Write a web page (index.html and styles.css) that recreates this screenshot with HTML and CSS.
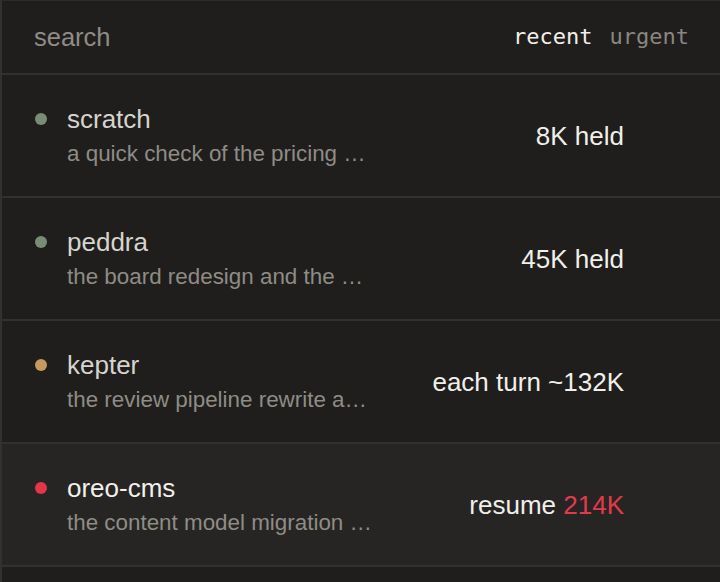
FILE: index.html
```html
<!DOCTYPE html>
<html lang="en">
<head>
    <meta charset="UTF-8">
    <meta name="viewport" content="width=device-width, initial-scale=1.0">
    <title>Sessions</title>
    <link rel="stylesheet" href="styles.css">
</head>
<body>
    <div class="panel">
        <header class="toolbar">
            <span class="search">search</span>
            <nav class="sort">
                <span class="sort-btn active">recent</span>
                <span class="sort-btn">urgent</span>
            </nav>
        </header>

        <ul class="session-list">
            <li class="session">
                <div class="info">
                    <div class="head">
                        <span class="dot idle"></span>
                        <span class="name">scratch</span>
                    </div>
                    <p class="desc">a quick check of the pricing …</p>
                </div>
                <span class="amount">8K held</span>
            </li>
            <li class="session">
                <div class="info">
                    <div class="head">
                        <span class="dot idle"></span>
                        <span class="name">peddra</span>
                    </div>
                    <p class="desc">the board redesign and the …</p>
                </div>
                <span class="amount">45K held</span>
            </li>
            <li class="session">
                <div class="info">
                    <div class="head">
                        <span class="dot busy"></span>
                        <span class="name">kepter</span>
                    </div>
                    <p class="desc">the review pipeline rewrite a…</p>
                </div>
                <span class="amount">each turn ~132K</span>
            </li>
            <li class="session selected">
                <div class="info">
                    <div class="head">
                        <span class="dot hot"></span>
                        <span class="name">oreo-cms</span>
                    </div>
                    <p class="desc">the content model migration …</p>
                </div>
                <span class="amount">resume <span class="warn">214K</span></span>
            </li>
            <li class="session"></li>
        </ul>
    </div>
</body>
</html>
```

FILE: styles.css
```css
body {
    margin: 0;
    background-color: #1f1e1d;
    font-family: "Liberation Sans", Arial, sans-serif;
    color: #d6d4cd;
    overflow: hidden;
}
.panel {
    border-left: 2px solid #323130;
    border-top: 1px solid #2c2b2a;
    height: 581px;
    overflow: hidden;
}
/* Barra de busca e ordenação */
.toolbar {
    height: 72px;
    display: flex;
    align-items: center;
    justify-content: space-between;
    padding: 0 31px 0 32px;
    border-bottom: 2px solid #323130;
}
.search {
    font-size: 25.5px;
    line-height: 30px;
    color: #8f8c85;
}
.sort {
    display: flex;
    gap: 17px;
    font-family: "DejaVu Sans Mono", Menlo, monospace;
    font-size: 22px;
    line-height: 30px;
    color: #8a8780;
}
.sort-btn.active {
    color: #f2f0ea;
}
/* Lista de sessões */
.session-list {
    list-style: none;
    margin: 0;
    padding: 0;
}
.session {
    height: 121px;
    display: flex;
    align-items: center;
    justify-content: space-between;
    padding: 0 96px 0 33px;
    border-bottom: 2px solid #323130;
}
.session.selected {
    background-color: #262524;
}
.head {
    display: flex;
    align-items: center;
    gap: 20px;
}
.dot {
    width: 12px;
    height: 12px;
    border-radius: 50%;
    flex-shrink: 0;
}
.dot.idle { background-color: #7b8c76; }
.dot.busy { background-color: #c69a5e; }
.dot.hot  { background-color: #e53549; }
.name {
    font-size: 26px;
    line-height: 30px;
}
.selected .name {
    color: #f2f0ea;
}
.desc {
    margin: 6px 0 0 32px;
    font-size: 22.4px;
    line-height: 28px;
    color: #8f8c85;
    white-space: nowrap;
}
.amount {
    font-size: 26px;
    line-height: 30px;
    color: #f0efe9;
}
.warn {
    color: #e5394b;
}
```
